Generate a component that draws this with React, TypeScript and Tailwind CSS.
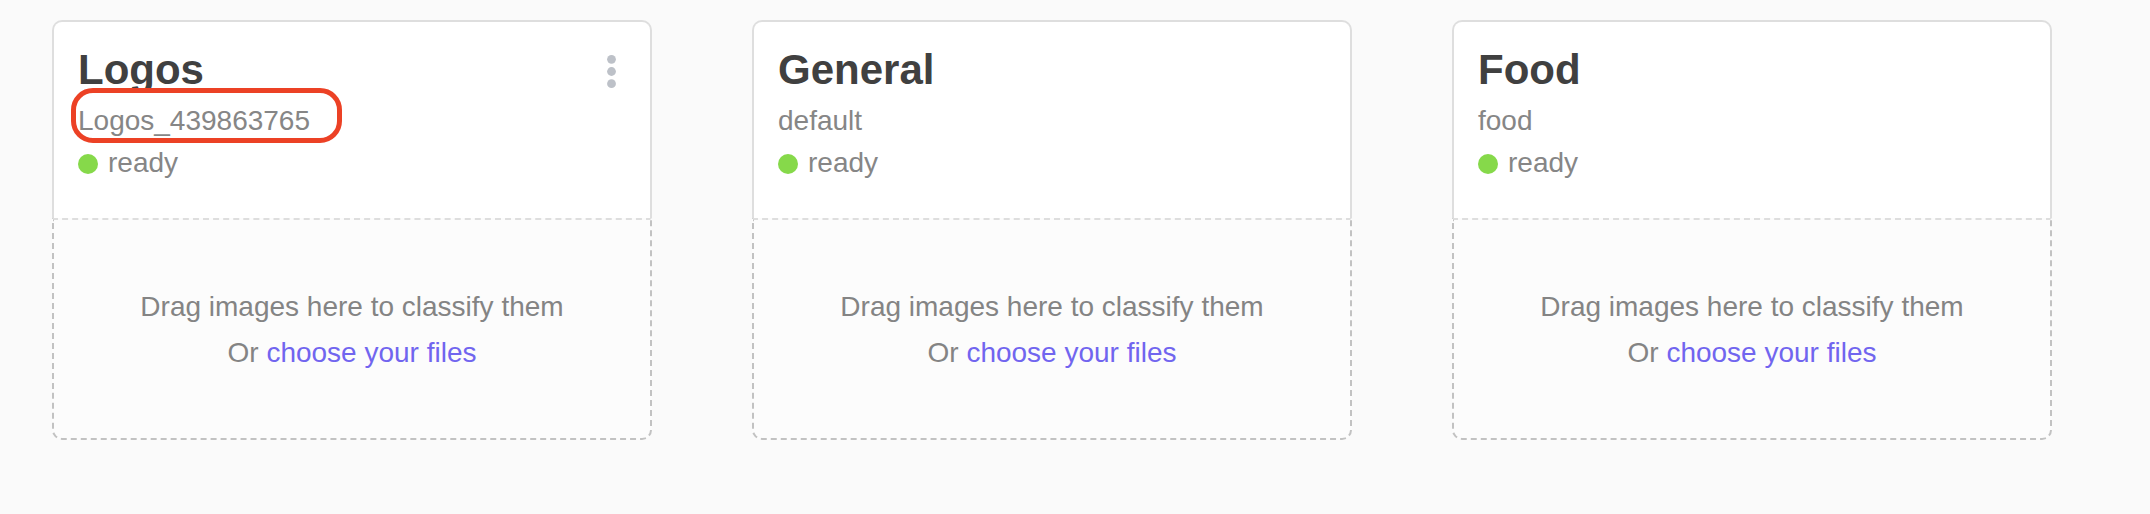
type Classifier = {
  name: string;
  id: string;
  status: string;
  highlighted?: boolean;
  hasMenu?: boolean;
};

const classifiers: Classifier[] = [
  { name: "Logos", id: "Logos_439863765", status: "ready", highlighted: true, hasMenu: true },
  { name: "General", id: "default", status: "ready" },
  { name: "Food", id: "food", status: "ready" },
];

function MenuButton({ label }: { label: string }) {
  return (
    <button type="button" aria-label={label} className="mt-2 flex h-9 w-7 items-center justify-center text-[#bdc1c8]">
      <svg viewBox="0 0 28 36" className="h-9 w-7" fill="currentColor" aria-hidden="true">
        <circle cx="13.5" cy="5.3" r="4.4" />
        <circle cx="13.5" cy="17.5" r="4.4" />
        <circle cx="13.5" cy="29.7" r="4.4" />
      </svg>
    </button>
  );
}

function ClassifierCard({ item }: { item: Classifier }) {
  return (
    <article className="flex flex-col text-[28px] text-[#868686]">
      <header className="rounded-t-[10px] border-2 border-b-0 border-[#dedede] bg-white px-6 pt-6 pb-[34px]">
        <div className="mb-[6px] flex h-12 items-start justify-between">
          <h2 className="text-[42px] leading-[48px] font-bold text-[#404040]">{item.name}</h2>
          {item.hasMenu && <MenuButton label={`${item.name} options`} />}
        </div>
        <p className="relative w-fit leading-[42px]">
          {item.id}
          {item.highlighted && (
            <span
              aria-hidden="true"
              className="pointer-events-none absolute -top-3 -right-8 -bottom-px -left-[7px] rounded-[22px] border-[5px] border-[#ec4125]"
            />
          )}
        </p>
        <p className="flex items-center gap-[10px] leading-[42px]">
          <span className="mt-[2px] size-5 rounded-full bg-[#86d94a]" />
          {item.status}
        </p>
      </header>
      <div className="rounded-b-[10px] border-2 border-dashed border-[#c2c2c2] border-t-[#dedede] bg-[#fcfcfc] px-6 pt-16 pb-[62px] text-center leading-[46px] text-[#848484]">
        <p>Drag images here to classify them</p>
        <p>
          Or{" "}
          <a href="#choose-files" className="text-[#7165ef]">
            choose your files
          </a>
        </p>
      </div>
    </article>
  );
}

export default function App() {
  return (
    <main className="min-h-screen bg-[#fafafa] pt-5 pr-[98px] pb-[74px] pl-[52px] font-['Liberation_Sans',Arial,sans-serif]">
      <div className="grid grid-cols-3 gap-[100px]">
        {classifiers.map((item) => (
          <ClassifierCard key={item.id} item={item} />
        ))}
      </div>
    </main>
  );
}
